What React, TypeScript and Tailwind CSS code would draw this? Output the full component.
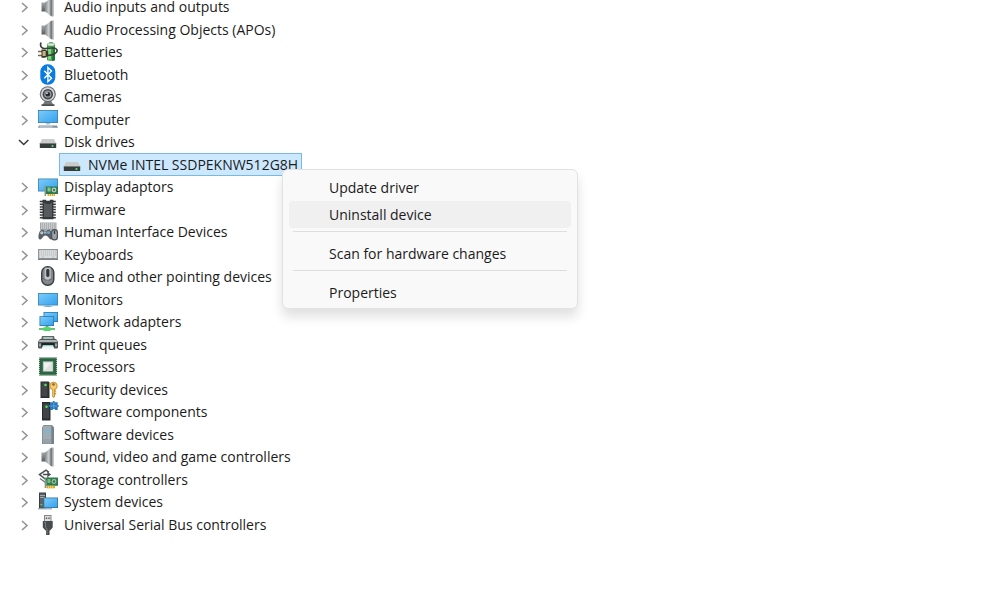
import { useState, type ReactNode } from "react";

type IconName =
  | "speaker"
  | "battery"
  | "bluetooth"
  | "camera"
  | "computer"
  | "disk"
  | "display"
  | "firmware"
  | "hid"
  | "keyboard"
  | "mouse"
  | "monitor"
  | "network"
  | "printer"
  | "processor"
  | "security"
  | "component"
  | "software"
  | "storage"
  | "system"
  | "usb";

type Device = { label: string; icon: IconName; children?: string[] };

const DEVICES: Device[] = [
  { label: "Audio inputs and outputs", icon: "speaker" },
  { label: "Audio Processing Objects (APOs)", icon: "speaker" },
  { label: "Batteries", icon: "battery" },
  { label: "Bluetooth", icon: "bluetooth" },
  { label: "Cameras", icon: "camera" },
  { label: "Computer", icon: "computer" },
  { label: "Disk drives", icon: "disk", children: ["NVMe INTEL SSDPEKNW512G8H"] },
  { label: "Display adaptors", icon: "display" },
  { label: "Firmware", icon: "firmware" },
  { label: "Human Interface Devices", icon: "hid" },
  { label: "Keyboards", icon: "keyboard" },
  { label: "Mice and other pointing devices", icon: "mouse" },
  { label: "Monitors", icon: "monitor" },
  { label: "Network adapters", icon: "network" },
  { label: "Print queues", icon: "printer" },
  { label: "Processors", icon: "processor" },
  { label: "Security devices", icon: "security" },
  { label: "Software components", icon: "component" },
  { label: "Software devices", icon: "software" },
  { label: "Sound, video and game controllers", icon: "speaker" },
  { label: "Storage controllers", icon: "storage" },
  { label: "System devices", icon: "system" },
  { label: "Universal Serial Bus controllers", icon: "usb" },
];

const ICONS: Record<IconName, ReactNode> = {
  speaker: (
    <>
      <path d="M3.500 5.500h3.500v9H3.500z" fill="url(#iron)" />
      <path d="M7 5.500 13 1v18l-6-4.500z" fill="url(#steel)" />
      <path d="M12.500 1.200 14 .5v19l-1.500-.7z" fill="#777b7f" />
      <path d="M14 .5h1.700v19H14z" fill="#a9acaf" />
    </>
  ),
  battery: (
    <>
      <path d="M9 2.500C9 1.500 10 1.200 11 1.200V.2h4v1c1.500 0 2 .5 2 1.500V18c0 1-8 1-8 0z" fill="#3d9c48" />
      <ellipse cx="13" cy="2.500" rx="3.700" ry="1.300" fill="#dfe5df" />
      <path d="M10 5h3v12.500h-3z" fill="#83d780" />
      <path d="M15.500 5H17v13c-.5.700-2 .8-3 .8z" fill="#207330" />
      <path d="M3 .5C1.500 4.500 4 7 8 6.500s10-1.500 11 1.500c.7 3-4 5-9 5.500" fill="none" stroke="#3a3d3e" strokeWidth="1.600" />
      <path d="M0 9.500h4M0 13.500h4" stroke="#776a4a" strokeWidth="1.400" />
      <path d="M3.500 7.500h3.700l3 2v4.500l-3 1.700H3.500z" fill="#39362e" />
      <path d="M4.500 9h3.200v5H4.500z" fill="#c8b27f" />
    </>
  ),
  bluetooth: (
    <>
      <rect x="2.300" y="-.7" width="15" height="20.500" rx="7.200" fill="#0a7be2" />
      <path d="m6.300 5.800 7.200 7.400-3.600 3.500V2.500l3.600 3.500-7.200 7.300" fill="none" stroke="#fff" strokeWidth="1.400" />
    </>
  ),
  camera: (
    <>
      <path d="M7 14h6l3 4.500H4z" fill="#747779" />
      <path d="M3.500 17.300h13V19h-13z" fill="#4e5052" />
      <circle cx="9.800" cy="7.200" r="8" fill="#696c6f" />
      <circle cx="9.800" cy="7.200" r="6.900" fill="#d4d6d7" />
      <circle cx="9.800" cy="7.200" r="5.200" fill="#44484c" />
      <circle cx="9.800" cy="7.200" r="3.600" fill="#959ca2" />
      <circle cx="9.800" cy="7.200" r="2.300" fill="#25292e" />
      <circle cx="9" cy="6.200" r=".9" fill="#dce5eb" />
    </>
  ),
  computer: (
    <>
      <path d="M0 0h20v13H0z" fill="#4382ac" />
      <path d="M.8.8h18.400v11.400H.8z" fill="url(#screen)" />
      <path d="M8 13h4v1.500H8z" fill="#a9c4d4" />
      <path d="M1 15.500h18l1 2.300H0z" fill="#7f919c" />
      <path d="M2 16.300h12.500M1.500 17.200h13" stroke="#e3eaee" strokeWidth=".5" />
    </>
  ),
  disk: (
    <>
      <path d="M4 7h12l2.200 4.500H1.800z" fill="#cacccc" />
      <path d="M1.800 11.200h16.400V16H1.800z" fill="#393c3c" />
      <path d="M1.800 11.500h16.400" stroke="#808383" strokeWidth=".8" />
      <circle cx="14.500" cy="14" r="1.100" fill="#4ce36c" />
    </>
  ),
  display: (
    <>
      <path d="M0 1.500h20V14.500H0z" fill="#4382ac" />
      <path d="M.8 2.300h18.400v11.400H.8z" fill="url(#screen)" />
      <path d="M6.500 8.500H8V19H6.500z" fill="#8b9892" />
      <path d="M8 9.500h12V17H8z" fill="#2c7b50" />
      <path d="M9.500 10.500h3v4h-3z" fill="#8ac78d" />
      <circle cx="16" cy="13" r="2.400" fill="#c3cdbd" />
      <circle cx="16" cy="13" r="1.200" fill="#3d7b53" />
      <path d="M9.500 17h7.500v2H9.500z" fill="#dca92c" />
      <path d="M11.500 17v2m2-2v2m2-2v2" stroke="#fff1b8" strokeWidth=".6" />
    </>
  ),
  firmware: (
    <>
      <path
        d="M1.800 1.500h16M1.800 4.200h16M1.800 6.900h16M1.800 9.600h16M1.800 12.300h16M1.800 15h16M1.800 17.700h16"
        stroke="#333638"
        strokeWidth="1.500"
      />
      <path d="M4.500-.2H8c0 2.500 4 2.500 4 0h3.500v19.400h-11z" fill="#36393b" />
      <path d="M6 2.500c2.500 2 5.500 2 8 0V17H6z" fill="#565a5c" />
      <path d="M3.800 2.200v16M16.200 2.200v16" stroke="#c5c7c8" strokeWidth=".9" strokeDasharray="1.300 1.400" />
    </>
  ),
  hid: (
    <>
      <path d="M2 .5h16.500V8H2z" fill="#a1a5a7" />
      <path d="M3 2h14.500M3 4h14.500M3 6h14.500" stroke="#f0f1f1" strokeWidth="1.200" strokeDasharray="1.300 .7" />
      <path
        d="M2 9c1.500-2 3.500-1.500 4.500-.5h2C10 7.500 11.500 7 13 9c1.200 2.500 2 8 .3 8.500-2 .5-2.800-4-5.800-4s-3.200 4.500-5.700 4c-2.300-.5-1.300-6 .2-8.500z"
        fill="#5a6066"
      />
      <circle cx="3.800" cy="10.800" r="1.600" fill="#bfc5c9" />
      <circle cx="10.500" cy="10.500" r="1.600" fill="#67aacd" />
      <path d="M6 9.500h2.500v2H6z" fill="#a1bac8" />
      <rect x="13" y="7" width="7" height="11.500" rx="3.300" fill="#4c5257" />
      <rect x="14.200" y="8.200" width="4.600" height="9" rx="2.200" fill="#9da3a8" />
      <path d="M16.500 8.500V12" stroke="#343a3f" strokeWidth="1.300" />
    </>
  ),
  keyboard: (
    <>
      <path d="M0 4h20v11H0z" fill="#898d90" />
      <path d="M.8 4.800h18.400v8.500H.8z" fill="#b9bcbe" />
      <path d="M1.500 6h17M1.500 8h17M1.500 10h17" stroke="#fafafa" strokeWidth="1.200" strokeDasharray="1.400 .6" />
      <path d="M1.500 12h3m1 0h9m1 0h3" stroke="#fafafa" strokeWidth="1.100" />
      <path d="M0 13.500h20V15H0z" fill="#7e8285" />
    </>
  ),
  mouse: (
    <>
      <rect x="3" y="-1" width="13.500" height="20" rx="6.500" fill="#3e4144" />
      <rect x="4.500" y=".5" width="10.500" height="17" rx="5" fill="#85898e" />
      <path d="M6.700.8h6V12l-3 2.500-3-2.500z" fill="#c0c4c8" />
      <rect x="8.200" y="2" width="3.200" height="8" rx="1.400" fill="#34383b" />
      <path d="M5 11c3 3 6.500 3 9.500 0" fill="none" stroke="#5a5f63" />
    </>
  ),
  monitor: (
    <>
      <path d="M0 3h20v12.500H0z" fill="#4382ac" />
      <path d="M.8 3.800h18.400v10.900H.8z" fill="url(#screen)" />
      <path d="M8 15.500h4V17H8z" fill="#65a7cf" />
      <path d="M5.500 16.600h9" stroke="#7db0cf" strokeWidth=".8" />
    </>
  ),
  network: (
    <>
      <path d="M5.500 0h14.500v10H5.500z" fill="#2e79ac" />
      <path d="M6.300.8h12.900v8.400H6.300z" fill="url(#screen)" />
      <path d="M1.500 4.200H16V14H1.500z" fill="#2e79ac" />
      <path d="M2.300 5h12.900v8.200H2.300z" fill="url(#screen)" />
      <path d="M7.500 14h3v1.500h-3z" fill="#58ad76" />
      <path d="M1 17h16" stroke="#57ba6e" strokeWidth="1.800" />
      <path d="M5.500 15.200h7v3.800h-7z" fill="#52d868" />
    </>
  ),
  printer: (
    <>
      <path d="M4 1h12l1 4H3z" fill="#606668" />
      <path d="M5.500 2h9l.5 2H5z" fill="#a5c7b7" />
      <path d="M2 4h16l2 2.500v6l-1 1H1l-1-1v-6z" fill="#515659" />
      <path d="M1.500 5h17l1 2H.5z" fill="#b0b5b7" />
      <path d="M3.500 8h13v4h-13z" fill="#202425" />
      <path d="M5 10h10l1.500 4.500h-13z" fill="#f1f7f7" />
      <path d="M5 10h10l.3 1.200H4.700z" fill="#8bd4c4" />
      <path d="M1 8.500h2v3H1zm16 0h2v3h-2z" fill="#9da2a4" />
    </>
  ),
  processor: (
    <>
      <path d="M1 .5h18v18H1z" fill="#2a6544" />
      <path
        d="M1.500 1h17M1.500 18h17M1.500 1v17M18.500 1v17"
        stroke="#a8c0a8"
        strokeWidth="1"
        strokeDasharray="1 1"
      />
      <path d="M4.800 4.300h10.400v10.400H4.800z" fill="#b5beb7" />
      <path d="M5.800 5.300h8.400v8.400H5.800z" fill="#f1f3f1" />
      <path d="M14.200 5.300v8.400H5.800z" fill="#dde2df" />
    </>
  ),
  security: (
    <>
      <path d="M2.500 1.500h8l1 1V18h-9z" fill="#292d2f" />
      <path d="M3.500 2.500h6v14h-6z" fill="#414547" />
      <circle cx="7.500" cy="5" r="1.300" fill="#4be35b" />
      <path d="M14 8h3v2l1.500 1-1.500 1.200 1.500 1.200L17 15v1.500L15.500 18 14 16.500z" fill="#c99533" />
      <circle cx="15.500" cy="6" r="4.200" fill="#d29a34" />
      <circle cx="15.500" cy="5.900" r="3" fill="#f1cd75" />
      <circle cx="15.500" cy="4.500" r="1.200" fill="#85602a" />
      <path d="M15.200 9v7.500" stroke="#f6d98c" />
    </>
  ),
  component: (
    <>
      <path d="M4 0h8l.5 1v17.500H4z" fill="#292d2f" />
      <path d="M5 1.500h6v15H5z" fill="#414547" />
      <circle cx="8.500" cy="4.700" r="1.300" fill="#4be35b" />
      <path
        d="M12 .2h2.700c-.5-1.500 2.500-1.500 2 0h3V3c1.500-.5 1.500 2.500 0 2v3H17c.5-1.500-2.700-1.500-2.200 0H12V5c-1.800.5-1.800-2.500 0-2z"
        fill="#2878bd"
      />
      <path d="M15.800.5v6M12.500 4h6.500" stroke="#70afe0" strokeWidth=".8" />
    </>
  ),
  software: (
    <>
      <path d="M5.500 0H14l2 2.500V19H4V2.500z" fill="#7d8890" />
      <path d="M5.500.8h8V18.500H4.800V2.500z" fill="#a0abb3" />
      <path d="M13.500.8 16 2.500V19h-2.500z" fill="#77828a" />
      <circle cx="10" cy="6.500" r="1.500" fill="#52c9ed" />
      <path d="M5 15h8.500M5 17h8.500" stroke="#84919b" strokeWidth=".7" />
    </>
  ),
  storage: (
    <>
      <path d="M11 2.300 8 .2 1.500 4.500 8 9.500l2.500-2" fill="none" stroke="#484d50" strokeWidth="1.500" />
      <path d="M5 4.500h6.500M9.300 2.500l2.700 2-2.700 2" fill="none" stroke="#484d50" strokeWidth="1.300" />
      <path d="m2 8.500 5.500 4" stroke="#6b7174" strokeWidth="1.300" />
      <path d="M6.700 7.500h1.600V18H6.700z" fill="#87918c" />
      <path d="M8.300 7.500H20v8.300H8.300z" fill="#2c7b4c" />
      <path d="M9.500 9h3v4h-3z" fill="#78b67d" />
      <circle cx="16" cy="11.500" r="2.400" fill="#a8c5ad" />
      <circle cx="16" cy="11.500" r="1.300" fill="#37764e" />
      <path d="M8.500 15.800H17v2.500H8.500z" fill="#dca728" />
      <path d="M10.500 15.800v2.500m2-2.500v2.500m2-2.500v2.500" stroke="#f9df87" strokeWidth=".7" />
    </>
  ),
  system: (
    <>
      <path d="M1 .5h7v16H1z" fill="#383d41" />
      <path d="M2 1.500h5v14H2z" fill="#5b6268" />
      <path d="M2 3.500h5M2 5.500h5" stroke="#b0b7bc" strokeWidth=".8" />
      <path d="M2.500 12h1.800v1.200H2.500z" fill="#51d775" />
      <path d="M5.500 5.500H20V16H5.500z" fill="#34749f" />
      <path d="M6.300 6.300h12.900v8.900H6.300z" fill="url(#screen)" />
      <path d="M0 16.800h14" stroke="#8fa6b5" strokeWidth="1.200" />
    </>
  ),
  usb: (
    <>
      <path d="M6 0h7.500v6.500H6z" fill="#84878a" />
      <path d="M7 1h5.500v5H7z" fill="#dedfe0" />
      <path d="M7.800 2.500h1.400V4H7.800zm2.500 0h1.400V4h-1.400z" fill="#54585a" />
      <path d="M4.800 6h9.900v6.500L12 15.500h-.5V20H8v-4.500h-.5l-2.700-3z" fill="#484b4d" />
      <path d="M6 7.200h1.500v5L9 14v5.500" fill="none" stroke="#85888a" strokeWidth=".8" />
    </>
  ),
};

function DeviceIcon({ name }: { name: IconName }) {
  return (
    <svg viewBox="0 0 20 20" className="size-5 shrink-0 overflow-visible" aria-hidden="true">
      {ICONS[name]}
    </svg>
  );
}

function Gradients() {
  return (
    <svg className="absolute size-0" aria-hidden="true">
      <defs>
        <linearGradient id="screen" x1="0" y1="0" x2="1" y2="1">
          <stop offset="0" stopColor="#79cbfb" />
          <stop offset="1" stopColor="#36a2ec" />
        </linearGradient>
        <linearGradient id="steel" x1="0" y1="0" x2="1" y2="0">
          <stop offset="0" stopColor="#85898c" />
          <stop offset="0.6" stopColor="#c9cbcd" />
          <stop offset="1" stopColor="#909497" />
        </linearGradient>
        <linearGradient id="iron" x1="0" y1="0" x2="0" y2="1">
          <stop offset="0" stopColor="#a3a7aa" />
          <stop offset="1" stopColor="#595d60" />
        </linearGradient>
      </defs>
    </svg>
  );
}

function Chevron({ open }: { open: boolean }) {
  return (
    <svg viewBox="0 0 12 12" className="size-3" fill="none" strokeWidth="1.600" aria-hidden="true">
      {open ? (
        <path d="m1 4 4.700 4.500L10.400 4" stroke="#3c3c3c" />
      ) : (
        <path d="M4 2l5 4.500L4 11" stroke="#949494" />
      )}
    </svg>
  );
}

// rows alternate between 22 and 23 pixels
const ROW = "flex h-[22px] items-center even:h-[23px]";

function DeviceTree() {
  const [open, setOpen] = useState<Record<string, boolean>>({ "Disk drives": true });

  return (
    <ul role="tree" aria-label="Devices" className="-mt-1">
      {DEVICES.flatMap((device) => {
        const expanded = Boolean(open[device.label]);
        const rows = [
          <li key={device.label} role="treeitem" aria-level={1} aria-expanded={expanded} className={ROW}>
            <button
              type="button"
              className="flex items-center pl-[18px]"
              onClick={() => setOpen({ ...open, [device.label]: !expanded })}
            >
              <Chevron open={expanded} />
              <span className="ml-2 flex items-center gap-1.5 whitespace-nowrap">
                <DeviceIcon name={device.icon} />
                <span className="leading-none">{device.label}</span>
              </span>
            </button>
          </li>,
        ];
        if (expanded) {
          device.children?.forEach((child) =>
            rows.push(
              <li key={child} role="treeitem" aria-level={2} aria-selected="true" className={ROW}>
                <button
                  type="button"
                  className="ml-[59px] flex h-full items-center gap-1.5 border border-[#7ab8e8] bg-[#cce8ff] pr-[3px] pl-0.5 whitespace-nowrap"
                >
                  <DeviceIcon name={device.icon} />
                  <span className="leading-none">{child}</span>
                </button>
              </li>,
            ),
          );
        }
        return rows;
      })}
    </ul>
  );
}

function MenuItem({ label, active = false }: { label: string; active?: boolean }) {
  return (
    <button
      type="button"
      role="menuitem"
      className={`flex h-[27px] w-full items-center rounded-sm pl-10 hover:bg-[#f0f0f0] ${active ? "bg-[#f0f0f0]" : ""}`}
    >
      {label}
    </button>
  );
}

function Separator() {
  return <hr className="mx-1 mt-[3px] mb-2 border-[#dedede]" />;
}

function ContextMenu() {
  return (
    <div
      role="menu"
      aria-label="Device actions"
      className="absolute top-[169px] left-[282px] w-[296px] rounded-md border border-[#e2e2e2] bg-[#f9f9f9] px-1.5 pt-1 pb-0.5 shadow-[0_8px_12px_rgba(0,0,0,0.12)]"
    >
      <MenuItem label="Update driver" />
      <MenuItem label="Uninstall device" active />
      <Separator />
      <MenuItem label="Scan for hardware changes" />
      <Separator />
      <MenuItem label="Properties" />
    </div>
  );
}

export default function App() {
  return (
    <main className="relative min-h-screen overflow-hidden bg-white font-['Open_Sans','Noto_Sans',sans-serif] text-sm text-[#1b1b1b]">
      <Gradients />
      <DeviceTree />
      <ContextMenu />
    </main>
  );
}
